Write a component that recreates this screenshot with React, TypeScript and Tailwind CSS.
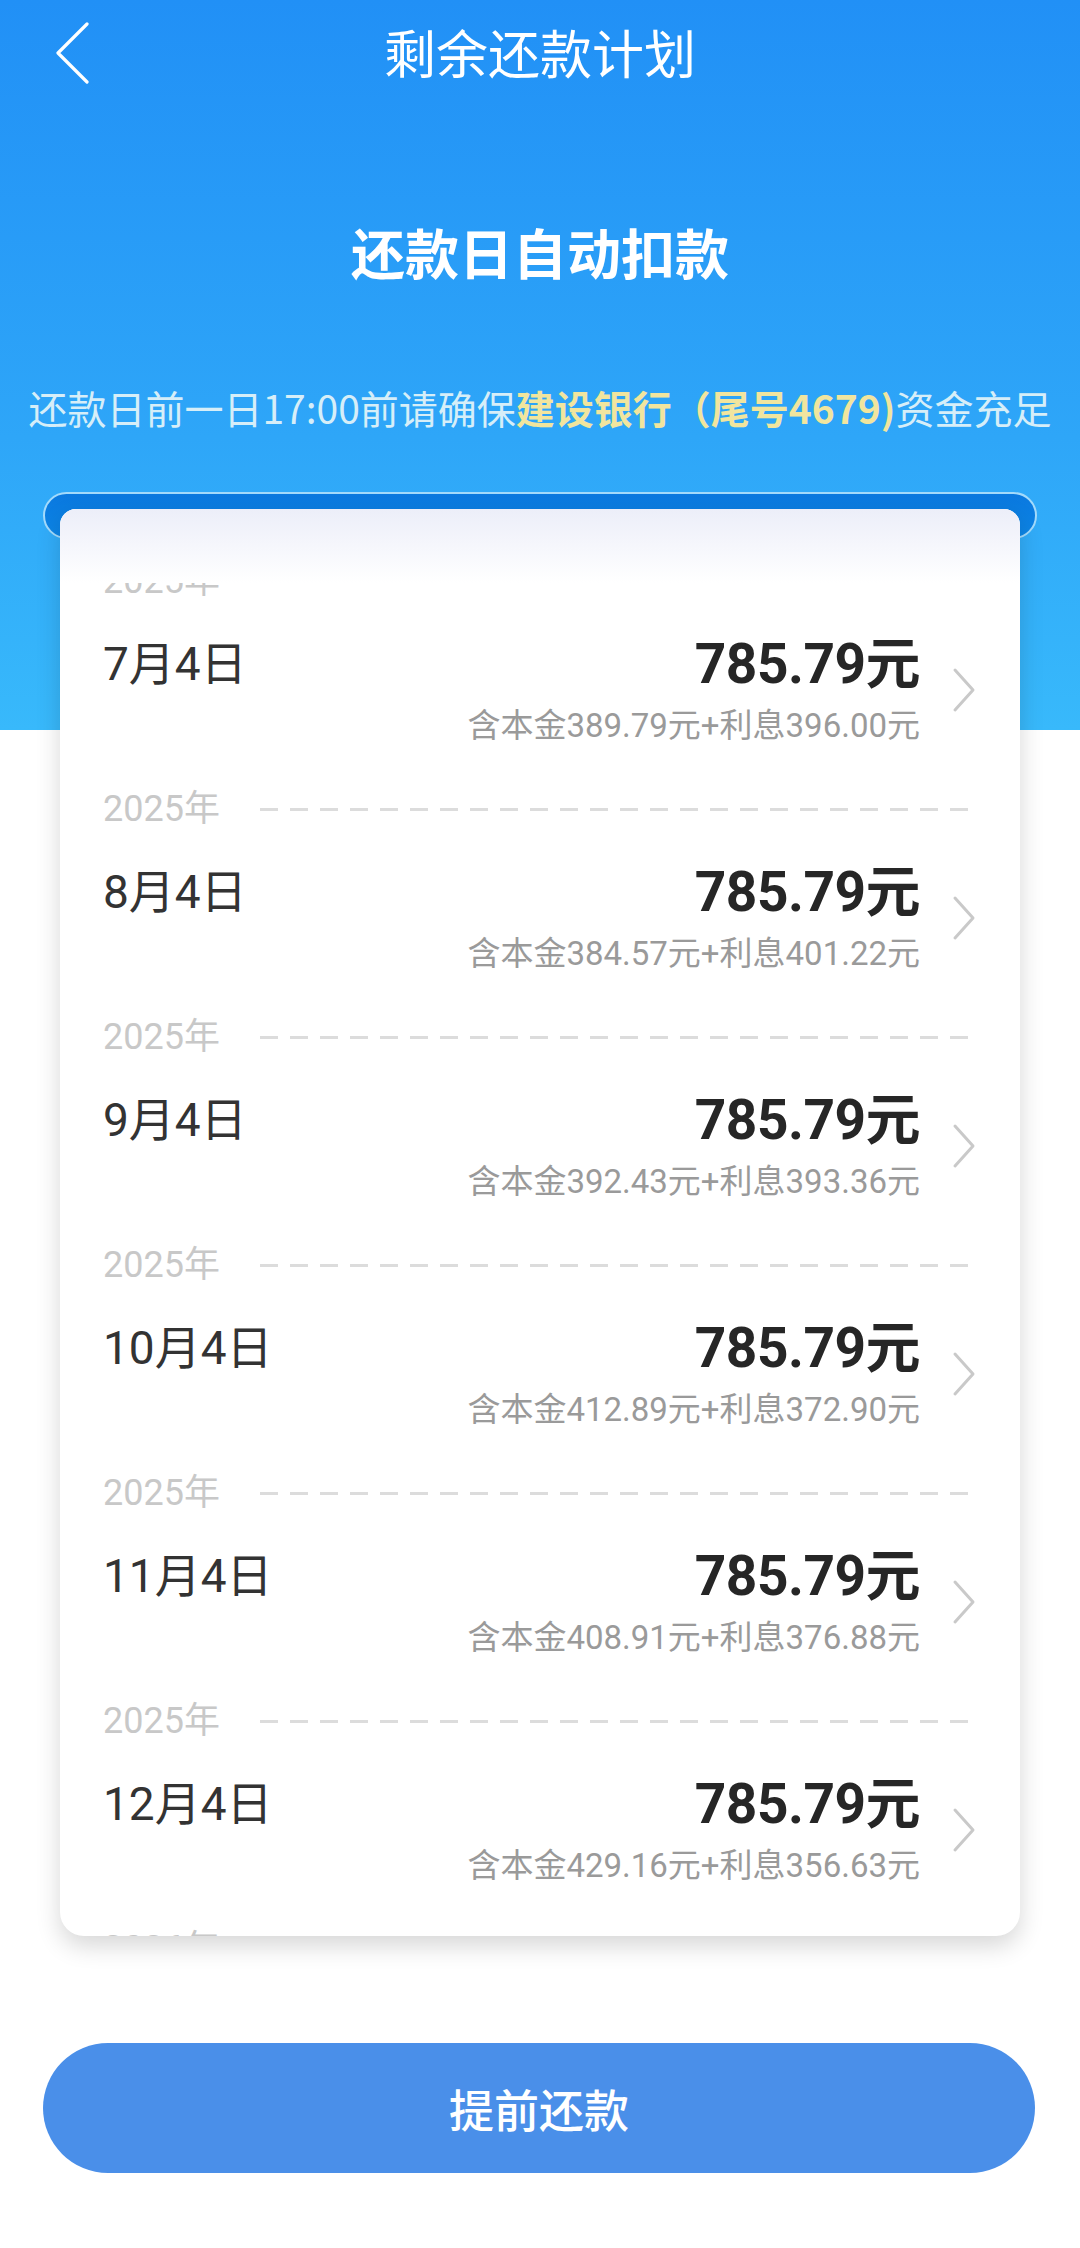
import React from 'react';

const ROWS = [
  { year: '2025年', date: '7月4日', principal: '389.79', interest: '396.00' },
  { year: '2025年', date: '8月4日', principal: '384.57', interest: '401.22' },
  { year: '2025年', date: '9月4日', principal: '392.43', interest: '393.36' },
  { year: '2025年', date: '10月4日', principal: '412.89', interest: '372.90' },
  { year: '2025年', date: '11月4日', principal: '408.91', interest: '376.88' },
  { year: '2025年', date: '12月4日', principal: '429.16', interest: '356.63' },
  { year: '2026年', date: '1月4日', principal: '431.02', interest: '354.77' },
];

function Chevron({ className, color, width }: { className: string; color: string; width: number }) {
  return (
    <svg viewBox="0 0 24 46" className={className} fill="none">
      <path d="M3 3 L21 23 L3 43" stroke={color} strokeWidth={width} strokeLinecap="round" strokeLinejoin="round" />
    </svg>
  );
}

function PlanRow({ row }: { row: (typeof ROWS)[number] }) {
  return (
    <div className="h-[228px] pl-[43px] pr-[44px]">
      {/* year + dashed divider */}
      <div className="flex h-[40px] items-center">
        <span className="text-[36px] leading-none text-[#c8c8c8]">{row.year}</span>
        <div className="ml-[40px] mr-[8px] h-[3px] flex-1 bg-[repeating-linear-gradient(90deg,#dcdcdc_0_18px,transparent_18px_30px)]" />
      </div>

      <div className="mt-[35px] flex items-center">
        <div className="flex-1 self-start text-[46px] leading-[56px] text-[#333333]">{row.date}</div>
        <div className="flex flex-col items-end">
          <div className="text-[55px] font-bold leading-[56px] tracking-[-0.5px] text-[#262626]">785.79元</div>
          <div className="mt-[16px] text-[33px] leading-[36px] text-[#9a9a9a]">
            含本金{row.principal}元+利息{row.interest}元
          </div>
        </div>
        <Chevron className="ml-[32px] h-[46px] w-[24px]" color="#c9c9c9" width={3} />
      </div>
    </div>
  );
}

export default function App() {
  return (
    <div className="min-h-[2248px] w-[1080px] bg-white font-['Roboto','Noto_Sans_CJK_SC',sans-serif]">
      {/* blue header */}
      <div className="flex h-[730px] flex-col bg-[linear-gradient(180deg,#2190f6_0%,#2ea6f8_60%,#38b9fb_100%)] font-['Noto_Sans_CJK_SC',sans-serif]">
        <div className="relative flex h-[115px] items-center justify-center pb-[11px]">
          <svg viewBox="0 0 40 64" className="absolute left-[50px] top-[22px] h-[64px] w-[40px]" fill="none">
            <path d="M37 2 L8 31 L37 60" stroke="#ffffff" strokeWidth={3.2} strokeLinecap="round" strokeLinejoin="round" />
          </svg>
          <h1 className="text-[52px] leading-none text-white">剩余还款计划</h1>
        </div>

        <div className="mt-[110px] text-center text-[54px] font-bold leading-none text-white">还款日自动扣款</div>

        <p className="mt-[109px] whitespace-nowrap text-center text-[39px] leading-none text-[#d6eef8]">
          还款日前一日17:00前请确保
          <span className="font-bold text-[#f1e59e]">建设银行（尾号4679)</span>
          资金充足
        </p>
      </div>

      {/* slot + card */}
      <div className="-mt-[238px] px-[43px]">
        <div className="h-[47px] rounded-full border-2 border-[#a3dafb] bg-[linear-gradient(180deg,#0a78df,#0d86e6)]" />
        <div className="relative mx-[17px] -mt-[30px] flex h-[1427px] flex-col overflow-hidden rounded-t-[16px] rounded-b-[24px] bg-white shadow-[0_10px_24px_rgba(0,0,0,0.16)]">
          <div className="h-[74px] shrink-0 bg-[linear-gradient(180deg,#eceef9,#ffffff)]" />
          <div className="flex-1 overflow-hidden">
            <div className="-mt-[22px]">
              {ROWS.map((r) => (
                <PlanRow key={r.date} row={r} />
              ))}
            </div>
          </div>
        </div>
      </div>

      {/* bottom button */}
      <div className="mt-[107px] px-[43px]">
        <button className="flex h-[130px] w-[992px] items-center justify-center rounded-full bg-[#4a8fe9] font-['Noto_Sans_CJK_SC',sans-serif] text-[45px] font-medium leading-none text-white">
          提前还款
        </button>
      </div>
    </div>
  );
}
